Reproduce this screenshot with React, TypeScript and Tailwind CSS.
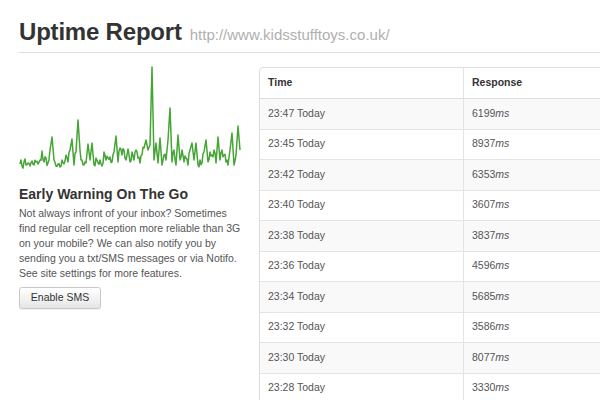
import React from 'react';

const rows = [
    { time: '23:47 Today', ms: 6199 },
    { time: '23:45 Today', ms: 8937 },
    { time: '23:42 Today', ms: 6353 },
    { time: '23:40 Today', ms: 3607 },
    { time: '23:38 Today', ms: 3837 },
    { time: '23:36 Today', ms: 4596 },
    { time: '23:34 Today', ms: 5685 },
    { time: '23:32 Today', ms: 3586 },
    { time: '23:30 Today', ms: 8077 },
    { time: '23:28 Today', ms: 3330 },
];

// response samples, one every 2px, starting at x=20
const samples = [
    164, 166, 162, 165, 163, 166, 161, 165, 162, 164, 160, 151, 162, 158, 163, 150, 137, 160, 166, 164,
    167, 160, 164, 155, 162, 150, 139, 165, 152, 120, 150, 160, 165, 163, 144, 160, 143, 165, 158, 163,
    160, 166, 152, 160, 158, 157, 162, 152, 136, 162, 148, 155, 150, 160, 149, 162, 152, 160, 150, 158,
    163, 155, 148, 140, 150, 145, 67, 160, 143, 163, 138, 165, 155, 160, 140, 108, 162, 150, 165, 135,
    160, 150, 162, 158, 165, 150, 143, 160, 143, 165, 160, 163, 152, 140, 162, 152, 155, 150, 163, 137,
    160, 150, 155, 162, 165, 150, 133, 165, 155, 126, 150,
];

const jitter = (i: number) => {
    const v = Math.sin(i * 12.9898) * 43758.5453;
    return v - Math.floor(v) - 0.5;
};

const buildPoints = () => {
    const pts: string[] = [];
    samples.forEach((y, i) => {
        const x = 20 + i * 2;
        pts.push(`${x - 19},${y - 67}`);
        const next = samples[i + 1];
        if (next !== undefined) {
            let my = (y + next) / 2;
            if (y > 145 && next > 145) my += jitter(i) * 10;
            pts.push(`${x + 1 - 19},${my - 67}`);
        }
    });
    return pts.join(' ');
};

const ResponseChart: React.FC = () => (
    <svg width="221" height="105" viewBox="0 0 221 105" className="block overflow-visible">
        <polyline
            points={buildPoints()}
            fill="none"
            stroke="#45a535"
            strokeWidth="1.5"
            strokeLinejoin="round"
        />
    </svg>
);

export default function App() {
    return (
        <div className="w-[600px] h-[400px] overflow-hidden bg-white font-['Liberation_Sans',Arial,sans-serif]">
            <div className="pl-[19px] pt-5">
                {/* header */}
                <div className="flex items-baseline gap-2 h-[33px] border-b border-[#dddddd] pb-2">
                    <h1 className="text-[24px] leading-6 font-bold text-[#333333] tracking-[-0.2px]">Uptime Report</h1>
                    <span className="text-[15px] leading-none text-[#b0b0b0]">http://www.kidsstufftoys.co.uk/</span>
                </div>

                <div className="flex gap-[19px] mt-[14px]">
                    {/* left column */}
                    <div className="w-[221px] shrink-0">
                        <ResponseChart />
                        <h2 className="mt-[13px] text-[14px] leading-[18px] font-bold text-[#333333]">
                            Early Warning On The Go
                        </h2>
                        <p className="mt-[2.5px] text-[10.5px] leading-[15px] text-[#555555] whitespace-nowrap">
                            Not always infront of your inbox? Sometimes
                            <br />
                            find regular cell reception more reliable than 3G
                            <br />
                            on your mobile? We can also notify you by
                            <br />
                            sending you a txt/SMS messages or via Notifo.
                            <br />
                            See site settings for more features.
                        </p>
                        <button
                            type="button"
                            className="mt-[6px] h-[22px] w-[82px] rounded-[3px] border border-[#c8c8c8] bg-gradient-to-b from-white to-[#e6e6e6] text-[10.5px] text-[#333333] shadow-[0_1px_1px_rgba(0,0,0,0.06)]"
                        >
                            Enable SMS
                        </button>
                    </div>

                    {/* table */}
                    <div className="w-[410px] shrink-0 border border-[#dddddd] rounded-tl-[4px] text-[10.5px]">
                        <div className="flex h-[31px] items-center border-b border-[#dddddd] font-bold text-[#333333]">
                            <div className="w-[204px] h-full flex items-center px-2 border-r border-[#e4e4e4]">Time</div>
                            <div className="flex-1 px-2">Response</div>
                        </div>
                        {rows.map((r, i) => (
                            <div
                                key={r.time}
                                className={`flex h-[30.5px] border-b border-[#e4e4e4] text-[#555555] ${i % 2 === 0 ? 'bg-[#f9f9f9]' : 'bg-white'}`}
                            >
                                <div className="w-[204px] flex items-center px-2 border-r border-[#e4e4e4]">{r.time}</div>
                                <div className="flex-1 flex items-center px-2">
                                    {r.ms}
                                    <em>ms</em>
                                </div>
                            </div>
                        ))}
                    </div>
                </div>
            </div>
        </div>
    );
}
